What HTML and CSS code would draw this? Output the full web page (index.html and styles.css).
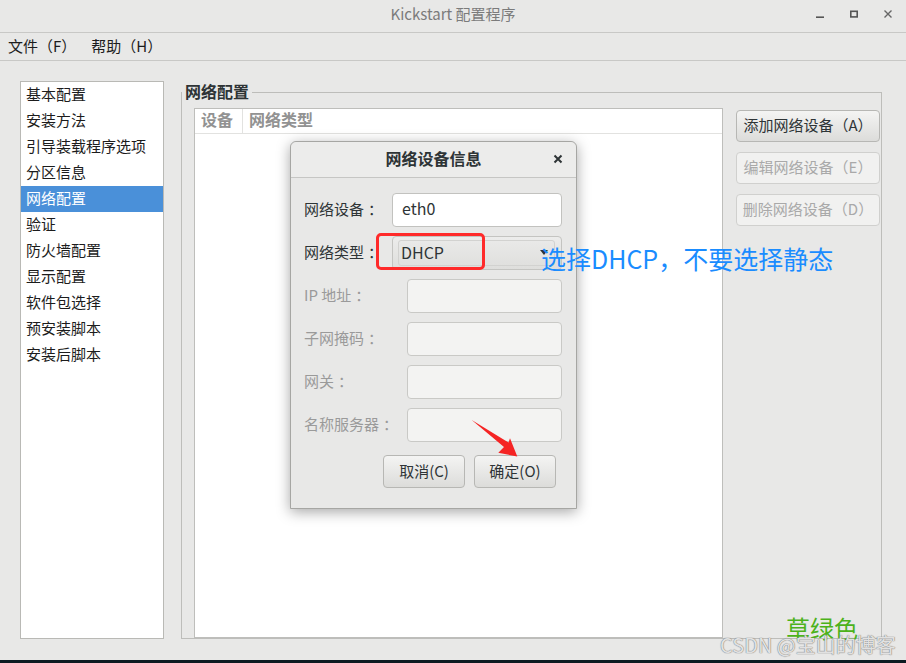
FILE: index.html
```html
<!DOCTYPE html>
<html lang="zh-CN">
<head>
    <meta charset="UTF-8">
    <title>Kickstart 配置程序</title>
    <link rel="stylesheet" href="styles.css">
</head>
<body>
    <div class="window">
        <div class="titlebar">
            <span></span>
            <div class="title">Kickstart 配置程序</div>
            <div class="wm-buttons">
                <svg width="10" height="10" viewBox="0 0 10 10"><path d="M1 8.2H9" stroke="#555" stroke-width="1.6"/></svg>
                <svg width="10" height="10" viewBox="0 0 10 10"><rect x="1.8" y="2.3" width="6.4" height="5.6" fill="none" stroke="#555" stroke-width="1.6"/></svg>
                <svg width="10" height="10" viewBox="0 0 10 10"><path d="M1.5 1.5L8.5 8.5M8.5 1.5L1.5 8.5" stroke="#666" stroke-width="1.4"/></svg>
            </div>
        </div>
        <div class="menubar">
            <span>文件（F）</span>
            <span>帮助（H）</span>
        </div>
        <div class="content">
            <ul class="sections">
                <li>基本配置</li>
                <li>安装方法</li>
                <li>引导装载程序选项</li>
                <li>分区信息</li>
                <li class="active">网络配置</li>
                <li>验证</li>
                <li>防火墙配置</li>
                <li>显示配置</li>
                <li>软件包选择</li>
                <li>预安装脚本</li>
                <li>安装后脚本</li>
            </ul>
            <fieldset class="frame">
                <legend>网络配置</legend>
                <div class="frame-body">
                    <div class="devices">
                        <div class="devices-head">
                            <span class="col-dev">设备</span>
                            <span class="col-type">网络类型</span>
                        </div>
                    </div>
                    <div class="device-actions">
                        <button class="btn">添加网络设备（A）</button>
                        <button class="btn" disabled>编辑网络设备（E）</button>
                        <button class="btn" disabled>删除网络设备（D）</button>
                    </div>
                </div>
            </fieldset>
        </div>

        <div class="dialog">
            <div class="dialog-head">
                <span></span>
                <div class="dialog-title">网络设备信息</div>
                <svg class="dialog-close" width="10" height="10" viewBox="0 0 10 10"><path d="M1.5 1.5L8.5 8.5M8.5 1.5L1.5 8.5" stroke="#2e3436" stroke-width="2"/></svg>
            </div>
            <div class="dialog-body">
                <div class="field">
                    <span class="label">网络设备<span class="colon">：</span></span>
                    <div class="entry">eth0</div>
                </div>
                <div class="field">
                    <span class="label">网络类型<span class="colon">：</span></span>
                    <div class="combo">
                        <div class="combo-value">
                            <span>DHCP</span>
                            <svg width="8" height="6" viewBox="0 0 8 6"><path d="M0 0H8L4 5Z" fill="#2e3436"/></svg>
                        </div>
                    </div>
                </div>
                <div class="field">
                    <span class="label is-disabled">IP 地址<span class="colon">：</span></span>
                    <div class="entry is-disabled"></div>
                </div>
                <div class="field">
                    <span class="label is-disabled">子网掩码<span class="colon">：</span></span>
                    <div class="entry is-disabled"></div>
                </div>
                <div class="field">
                    <span class="label is-disabled">网关<span class="colon">：</span></span>
                    <div class="entry is-disabled"></div>
                </div>
                <div class="field">
                    <span class="label is-disabled">名称服务器<span class="colon">：</span></span>
                    <div class="entry is-disabled"></div>
                </div>
                <div class="dialog-actions">
                    <button class="btn dialog-btn">取消(C)</button>
                    <button class="btn dialog-btn">确定(O)</button>
                </div>
            </div>
        </div>

        <div class="mark-box"></div>
        <svg class="mark-arrow" width="60" height="50" viewBox="0 0 60 50">
            <polygon points="6.7,5 43.5,27.5 45,23.3 52.3,41.5 33.3,37.7 39,32" fill="#f52424"/>
        </svg>
        <div class="note-text">选择DHCP，不要选择静态</div>
        <div class="stamp">草绿色</div>
        <div class="watermark">CSDN @宝山的博客</div>
    </div>
</body>
</html>
```

FILE: styles.css
```css
body{
    margin: 0;
    background-color: #0c1a21;
    font-family: "Noto Sans CJK SC", "Noto Sans", sans-serif;
    font-size: 15px;
    color: #1c1c1c;
}
.window{
    position: relative;
    width: 906px;
    height: 660px;
    background-color: #e8e8e7;
    display: flex;
    flex-direction: column;
    overflow: hidden;
}
.titlebar{
    height: 33px;
    box-sizing: border-box;
    border-bottom: 1px solid #c8c8c6;
    padding-top: 4px;
    display: grid;
    grid-template-columns: 1fr auto 1fr;
    align-items: start;
}
.title{
    color: #7b7b7b;
    line-height: 20px;
}
.wm-buttons{
    justify-self: end;
    display: flex;
    align-items: center;
    gap: 24px;
    height: 20px;
    padding-right: 13px;
}
.menubar{
    height: 28px;
    box-sizing: border-box;
    border-bottom: 1px solid #c8c8c6;
    display: flex;
    gap: 15px;
    padding-left: 8px;
    line-height: 25px;
}
.content{
    flex: 1;
    display: flex;
    padding: 20px 24px 21px 20px;
    min-height: 0;
}
.sections{
    list-style: none;
    margin: 0;
    padding: 0;
    width: 144px;
    box-sizing: border-box;
    border: 1px solid #b9b9b5;
    background-color: #fff;
}
.sections li{
    height: 26px;
    line-height: 24px;
    padding-left: 5px;
}
.sections li.active{
    background-color: #4a90d9;
    color: #fff;
}
.frame{
    margin: 0 0 0 17px;
    padding: 0 1px 0 12px;
    border: 1px solid #bdbdba;
    flex: 1;
    min-width: 0;
    display: flex;
    flex-direction: column;
}
.frame legend{
    margin-left: -12px;
    padding: 0 3px 2px;
    font-weight: bold;
    font-size: 16px;
    line-height: 20px;
    color: #2e3436;
}
.frame-body{
    flex: 1;
    display: flex;
    padding-top: 5px;
}
.devices{
    flex: 1;
    background-color: #fff;
    border: 1px solid #bebebb;
}
.devices-head{
    display: flex;
    height: 25px;
    box-sizing: border-box;
    border-bottom: 1px solid #e2e2e0;
    font-weight: bold;
    font-size: 16px;
    color: #929292;
    line-height: 21px;
}
.col-dev{
    width: 48px;
    box-sizing: border-box;
    padding-left: 6px;
    border-right: 1px solid #e2e2e0;
}
.col-type{
    padding-left: 6px;
}
.device-actions{
    width: 144px;
    margin-left: 13px;
    padding-top: 2px;
    display: flex;
    flex-direction: column;
    gap: 10px;
}
.btn{
    height: 32px;
    padding: 0 0 3px;
    border: 1px solid #b7b7b4;
    border-radius: 4px;
    background: linear-gradient(#f4f4f3, #dcdcda);
    font: inherit;
    color: #2e3436;
}
.btn:disabled{
    background: #f1f1f0;
    border-color: #d0d0ce;
    color: #a9a9a9;
}
.dialog{
    position: absolute;
    left: 290px;
    top: 141px;
    width: 287px;
    height: 368px;
    box-sizing: border-box;
    border: 1px solid #a6a6a3;
    border-radius: 6px 6px 0 0;
    background-color: #e8e8e7;
    box-shadow: 0 3px 14px rgba(0, 0, 0, 0.35);
    display: flex;
    flex-direction: column;
}
.dialog-head{
    height: 36px;
    box-sizing: border-box;
    border-bottom: 1px solid #c6c6c4;
    border-radius: 6px 6px 0 0;
    background-color: #ececeb;
    display: grid;
    grid-template-columns: 1fr auto 1fr;
    align-items: center;
    padding-bottom: 4px;
}
.dialog-title{
    font-weight: bold;
    font-size: 16px;
    color: #2e3436;
}
.dialog-close{
    justify-self: end;
    margin-right: 13px;
    margin-top: 2px;
}
.dialog-body{
    padding: 15px 14px 0 13px;
    display: flex;
    flex-direction: column;
    gap: 9px;
}
.field{
    display: flex;
    align-items: center;
    justify-content: space-between;
    height: 34px;
}
.label{
    color: #2e3436;
    padding-bottom: 3px;
}
.label.is-disabled{
    color: #9a9a9a;
}
.colon{
    padding-left: 4px;
}
.entry{
    width: 170px;
    height: 34px;
    box-sizing: border-box;
    border: 1px solid #c2c2bf;
    border-radius: 4px;
    background-color: #fff;
    padding: 0 9px;
    line-height: 29px;
    font-size: 16px;
    color: #2e3436;
}
.entry.is-disabled{
    width: 155px;
    background-color: #f3f3f2;
    border-color: #c9c9c6;
}
.combo{
    width: 170px;
    height: 34px;
    box-sizing: border-box;
    border: 1px solid #c4c4c1;
    border-radius: 4px;
    background: linear-gradient(#ececeb, #dededc);
    padding: 3px 6px 3px 5px;
    display: flex;
}
.combo-value{
    flex: 1;
    box-sizing: border-box;
    border: 1px solid #d2d2d0;
    border-radius: 3px;
    background: linear-gradient(#e9e9e8, #e0e0de);
    padding: 0 6px 3px 2px;
    display: flex;
    align-items: center;
    justify-content: space-between;
    font-size: 16px;
    color: #2e3436;
}
.combo-value svg{
    margin-top: 3px;
}
.dialog-actions{
    display: flex;
    justify-content: flex-end;
    gap: 9px;
    margin-top: 4px;
    margin-right: 6px;
}
.dialog-btn{
    width: 82px;
    height: 33px;
}
.mark-box{
    position: absolute;
    left: 376px;
    top: 233px;
    width: 109px;
    height: 37px;
    box-sizing: border-box;
    border: 3px solid #ff2a2a;
    border-radius: 5px;
}
.mark-arrow{
    position: absolute;
    left: 465px;
    top: 415px;
}
.note-text{
    position: absolute;
    left: 541px;
    top: 243px;
    font-size: 25px;
    line-height: 30px;
    color: #1a8cff;
    white-space: nowrap;
}
.stamp{
    position: absolute;
    left: 786px;
    top: 614px;
    font-size: 24px;
    line-height: 28px;
    color: #4cb21a;
}
.watermark{
    position: absolute;
    left: 720px;
    top: 633px;
    font-size: 20px;
    line-height: 24px;
    color: rgba(240, 240, 240, 0.9);
    text-shadow: 0 0 1px #7a7a7a, 0 0 1px #7a7a7a;
    white-space: nowrap;
}
```
